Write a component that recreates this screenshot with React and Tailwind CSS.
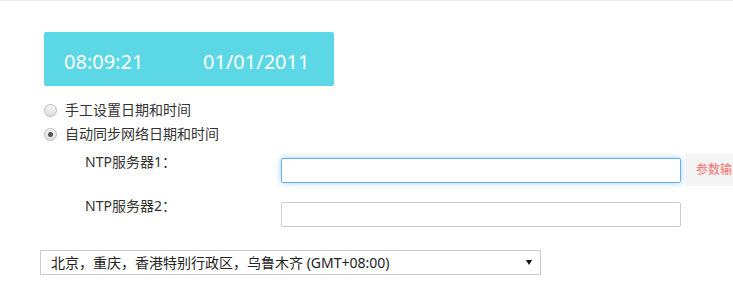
import { useState } from 'react'

const font = { fontFamily: '"Noto Sans", "Noto Sans CJK SC", sans-serif' }

function Radio({ checked, label, onClick }) {
  return (
    <div className="flex items-center h-[24px] cursor-pointer" onClick={onClick}>
      <span className="w-[13px] h-[13px] rounded-full border border-[#bdbdbd] bg-gradient-to-b from-[#f6f6f6] to-[#dedede] flex items-center justify-center">
        {checked && <span className="w-[5px] h-[5px] rounded-full bg-[#555]" />}
      </span>
      <span className="ml-[8px] text-[14px] leading-[20px] text-[#333]">{label}</span>
    </div>
  )
}

export default function App() {
  const [mode, setMode] = useState('ntp')
  const [ntp1, setNtp1] = useState('')
  const [ntp2, setNtp2] = useState('')

  return (
    <div className="w-[733px] h-[304px] overflow-hidden bg-white border-t border-[#ebebf5]" style={font}>
      <div className="pl-[40px] pt-[31px]">
        {/* clock */}
        <div className="ml-[4px] w-[290px] h-[54px] rounded-[2px] bg-[#5bd7e5] flex items-center pt-[5px] text-white text-[20px]">
          <span className="pl-[20px] w-[159px]">08:09:21</span>
          <span>01/01/2011</span>
        </div>

        {/* mode */}
        <div className="ml-[4px] mt-[12px]">
          <Radio checked={mode === 'manual'} label="手工设置日期和时间" onClick={() => setMode('manual')} />
          <Radio checked={mode === 'ntp'} label="自动同步网络日期和时间" onClick={() => setMode('ntp')} />
        </div>

        {/* ntp servers */}
        <div className="mt-[8px] flex items-center">
          <label className="shrink-0 self-start -mt-[2px] pl-[45px] w-[241px] text-[14px] leading-[20px] text-[#333]">NTP服务器1：</label>
          <input
            value={ntp1}
            onChange={e => setNtp1(e.target.value)}
            className="shrink-0 w-[400px] h-[25px] rounded-[2px] border border-[#66afe9] shadow-[0_0_6px_rgba(102,175,233,0.6)] outline-none px-2 text-[14px]"
          />
          <div className="ml-[4px] shrink-0 h-[32px] px-[11px] bg-[#f4f4f4] flex items-center whitespace-nowrap text-[12px] text-[#f56c6c]">
            参数输入错误
          </div>
        </div>
        <div className="mt-[16px] flex items-start">
          <label className="shrink-0 -mt-[6px] pl-[45px] w-[241px] text-[14px] leading-[20px] text-[#333]">NTP服务器2：</label>
          <input
            value={ntp2}
            onChange={e => setNtp2(e.target.value)}
            className="shrink-0 w-[400px] h-[25px] rounded-[2px] border border-[#cccccc] outline-none px-2 text-[14px]"
          />
        </div>

        {/* timezone */}
        <div className="mt-[23px] w-[501px] h-[25px] border border-[#cccccc] flex items-center justify-between pl-[10px] pr-[8px] text-[14px] text-[#222]">
          <span>北京，重庆，香港特别行政区，乌鲁木齐 (GMT+08:00)</span>
          <svg width="6" height="5" viewBox="0 0 6 5">
            <path d="M0 0 L6 0 L3 5 Z" fill="#111" />
          </svg>
        </div>
      </div>
    </div>
  )
}
